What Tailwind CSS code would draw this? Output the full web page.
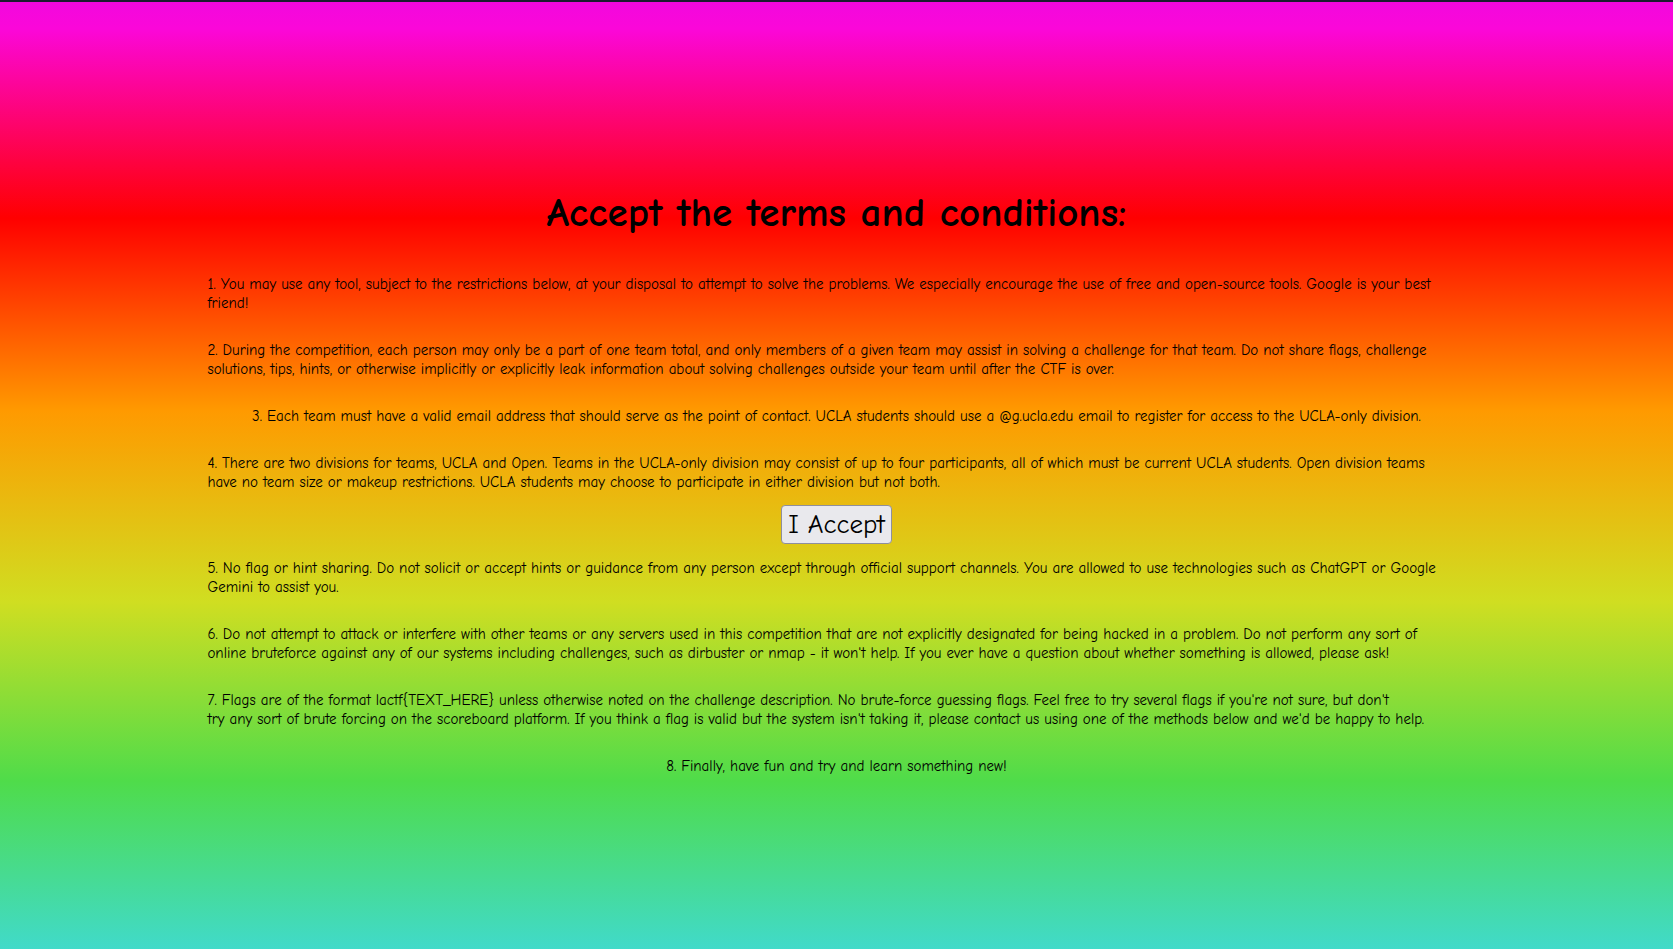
<!DOCTYPE html>
<html lang="en">
<head>
<meta charset="utf-8">
<meta name="viewport" content="width=device-width, initial-scale=1">
<title>Terms and conditions</title>
<script src="https://cdn.jsdelivr.net/npm/@tailwindcss/browser@4"></script>
</head>
<body class="min-h-screen flex flex-col border-t-2 border-[#1c1b2e] bg-[linear-gradient(180deg,#ba0cf8_-17%,#fb07d9_3%,#ff0000_23%,#ff9a00_43.3%,#d0de21_63.4%,#4fdc4a_82.3%,#3fdad8_102%)] font-['Comic_Sans_MS','Comic_Neue','Open_Sans',sans-serif] text-black">
<main class="grow flex flex-col items-center justify-center gap-7 px-[12.4%] pt-3 text-[15px] leading-[19px]">
<h1 class="mb-2 text-[41px] leading-[52px] font-bold">Accept the terms and conditions:</h1>
<p class="w-full">1. You may use any tool, subject to the restrictions below, at your disposal to attempt to solve the problems. We especially encourage the use of free and open-source tools. Google is your best<br>friend!</p>
<p class="w-full">2. During the competition, each person may only be a part of one team total, and only members of a given team may assist in solving a challenge for that team. Do not share flags, challenge<br>solutions, tips, hints, or otherwise implicitly or explicitly leak information about solving challenges outside your team until after the CTF is over.</p>
<p>3. Each team must have a valid email address that should serve as the point of contact. UCLA students should use a @g.ucla.edu email to register for access to the UCLA-only division.</p>
<p class="w-full">4. There are two divisions for teams, UCLA and Open. Teams in the UCLA-only division may consist of up to four participants, all of which must be current UCLA students. Open division teams<br>have no team size or makeup restrictions. UCLA students may choose to participate in either division but not both.</p>
<button type="button" class="-mt-[15px] -mb-[13px] h-[39px] px-[6px] rounded border border-[#8f8f9d] bg-[#e9e9ed] text-[27px] leading-[33px]">I Accept</button>
<p class="w-full">5. No flag or hint sharing. Do not solicit or accept hints or guidance from any person except through official support channels. You are allowed to use technologies such as ChatGPT or Google<br>Gemini to assist you.</p>
<p class="w-full">6. Do not attempt to attack or interfere with other teams or any servers used in this competition that are not explicitly designated for being hacked in a problem. Do not perform any sort of<br>online bruteforce against any of our systems including challenges, such as dirbuster or nmap - it won't help. If you ever have a question about whether something is allowed, please ask!</p>
<p class="w-full">7. Flags are of the format lactf{TEXT_HERE} unless otherwise noted on the challenge description. No brute-force guessing flags. Feel free to try several flags if you're not sure, but don't<br>try any sort of brute forcing on the scoreboard platform. If you think a flag is valid but the system isn't taking it, please contact us using one of the methods below and we'd be happy to help.</p>
<p>8. Finally, have fun and try and learn something new!</p>
</main>
</body>
</html>
